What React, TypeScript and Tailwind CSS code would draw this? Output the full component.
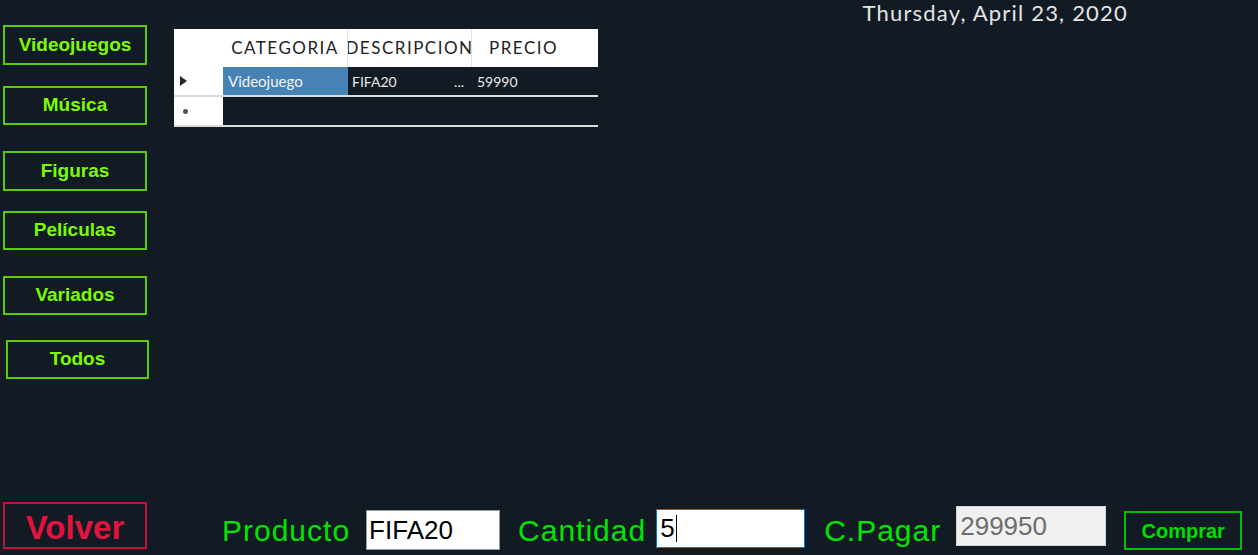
const navButtons = [
  { label: "Videojuegos", box: "h-[40px] w-[144px]" },
  { label: "Música", box: "mt-[21px] h-[39px] w-[144px]" },
  { label: "Figuras", box: "mt-[26px] h-[40px] w-[144px]" },
  { label: "Películas", box: "mt-[20px] h-[39px] w-[144px]" },
  { label: "Variados", box: "mt-[26px] h-[39px] w-[144px]" },
  { label: "Todos", box: "mt-[25px] ml-[3px] h-[39px] w-[143px]" },
];

function ProductGrid() {
  return (
    <div className="w-[424px] font-['Lato',sans-serif]">
      {/* header */}
      <div className="flex h-[38px] bg-white text-[17px] tracking-[1.5px] text-[#222]">
        <div className="w-[49px]" />
        <div className="flex w-[125px] items-center justify-center border-r border-[#e2e2e2]">
          CATEGORIA
        </div>
        <div className="flex w-[124px] items-center justify-center overflow-hidden whitespace-nowrap border-r border-[#e2e2e2]">
          DESCRIPCION
        </div>
        <div className="flex flex-1 items-center pl-[17px]">PRECIO</div>
      </div>

      {/* row 1 */}
      <div className="flex h-[30px] border-b-2 border-[#dcdcdc] text-[15px]">
        <div className="flex w-[49px] items-center bg-white pl-[6px]">
          <svg width="7" height="10" viewBox="0 0 7 10">
            <polygon points="0,0 7,5 0,10" fill="#2a2a2a" />
          </svg>
        </div>
        <div className="flex w-[125px] items-center bg-[#4682b4] pl-[5px] text-[#f2f2f2]">
          Videojuego
        </div>
        <div className="flex w-[124px] items-center justify-between pl-[4px] pr-[8px] text-[14px] text-[#e8e8e8]">
          <span>FIFA20</span>
          <span>...</span>
        </div>
        <div className="flex flex-1 items-center pl-[5px] text-[14px] text-[#e8e8e8]">
          59990
        </div>
      </div>

      {/* new row */}
      <div className="flex h-[30px] border-b-2 border-[#dcdcdc]">
        <div className="flex w-[49px] items-center bg-white pl-[9px]">
          <span className="block h-[5px] w-[5px] rounded-full bg-[#555]" />
        </div>
        <div className="flex-1" />
      </div>
    </div>
  );
}

export default function App() {
  return (
    <div className="flex h-[555px] w-full flex-col overflow-hidden bg-[#121b24] font-['Liberation_Sans',Arial,sans-serif]">
      <div className="flex">
        <nav className="flex w-[174px] flex-col pl-[3px] pt-[25px]">
          {navButtons.map((b) => (
            <button
              key={b.label}
              className={`flex items-center justify-center border-2 border-[#5ccc00] text-[19px] font-bold text-[#7cfc00] ${b.box}`}
            >
              {b.label}
            </button>
          ))}
        </nav>

        <div className="pt-[29px]">
          <ProductGrid />
        </div>

        <p className="ml-auto mr-[130px] font-['Lato',sans-serif] text-[22px] leading-[25px] tracking-[1.2px] text-[#e4e4e4]">
          Thursday, April 23, 2020
        </p>
      </div>

      <div className="mb-[5px] mt-auto flex items-start pl-[3px]">
        <button className="flex h-[47px] w-[144px] items-center justify-center border-2 border-[#c41235] pt-[5px] text-[33px] font-bold text-[#e0143c]">
          Volver
        </button>

        <span className="ml-[75px] mt-[14px] text-[30px] leading-none tracking-[1px] text-[#00e600]">
          Producto
        </span>
        <div className="ml-[16px] mt-[8px] flex h-[40px] w-[134px] items-center border border-[#9a9a9a] bg-white pl-[2px] text-[26px] text-black">
          FIFA20
        </div>

        <span className="ml-[18px] mt-[14px] text-[30px] leading-none tracking-[1px] text-[#00e600]">
          Cantidad
        </span>
        <div className="ml-[10px] mt-[7px] flex h-[39px] w-[149px] items-center border border-[#0078d7] bg-white pl-[3px] text-[26px] text-black">
          5
          <span className="ml-[1px] block h-[27px] w-px bg-black" />
        </div>

        <span className="ml-[19px] mt-[14px] text-[30px] leading-none tracking-[1px] text-[#00e600]">
          C.Pagar
        </span>
        <div className="ml-[15px] mt-[4px] flex h-[40px] w-[150px] items-center border border-[#d4d4d4] bg-[#f0f0f0] pl-[3px] text-[26px] text-[#6d6d6d]">
          299950
        </div>

        <button className="ml-[18px] mt-[9px] flex h-[39px] w-[118px] items-center justify-center border-2 border-[#00c000] text-[20px] font-bold text-[#00dd00]">
          Comprar
        </button>
      </div>
    </div>
  );
}
